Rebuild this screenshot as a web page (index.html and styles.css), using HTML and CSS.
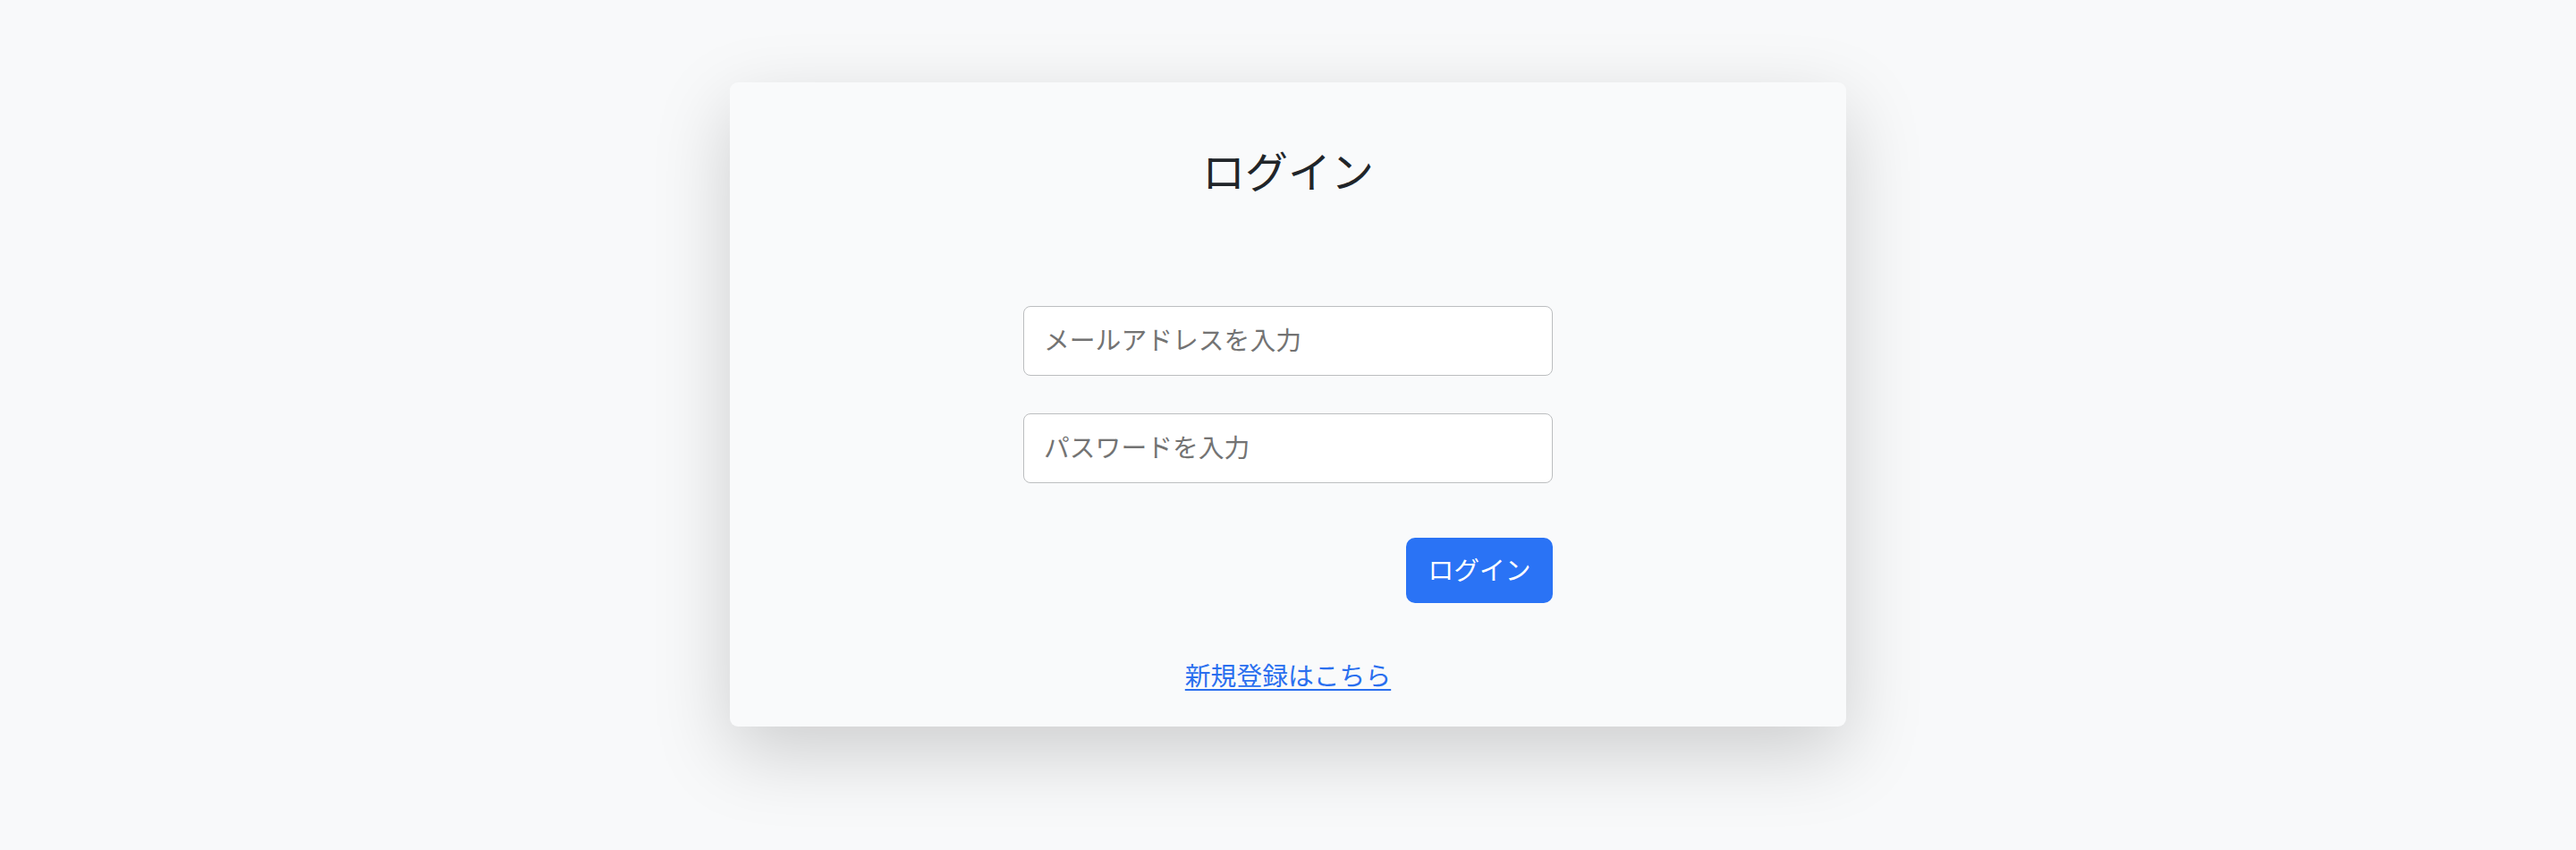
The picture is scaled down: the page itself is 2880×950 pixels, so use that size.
FILE: index.html
```html
<!DOCTYPE html>
<html lang="ja">
<head>
<meta charset="utf-8">
<title>ログイン</title>
<link rel="stylesheet" href="styles.css">
</head>
<body>
<main class="page">
  <section class="card">
    <h1 class="card-title">ログイン</h1>
    <form class="login-form">
      <input class="field" type="email" placeholder="メールアドレスを入力">
      <input class="field" type="password" placeholder="パスワードを入力">
      <button class="btn-primary" type="button">ログイン</button>
    </form>
    <a class="signup-link" href="#">新規登録はこちら</a>
  </section>
</main>
</body>
</html>
```

FILE: styles.css
```css
html, body {
  margin: 0;
  padding: 0;
  background: #f8f9fa;
  font-family: "Noto Sans CJK JP", "Noto Sans", sans-serif;
  color: #212529;
}

.page {
  display: flex;
  justify-content: center;
  align-items: flex-start;
  box-sizing: border-box;
  min-height: 950px;
  padding-top: 92px;
}

.card {
  width: 1248px;
  box-sizing: border-box;
  height: 720px;
  background: #f9fafb;
  border-radius: 9px;
  box-shadow: 0 29px 86px rgba(0, 0, 0, 0.175);
  display: flex;
  flex-direction: column;
  align-items: center;
  padding-top: 68px;
}

.card-title {
  margin: 0 0 124px 0;
  font-size: 48px;
  line-height: 58px;
  font-weight: 400;
  color: #212529;
}

.login-form {
  width: 592px;
  display: flex;
  flex-direction: column;
}

.field {
  box-sizing: border-box;
  width: 100%;
  height: 78px;
  margin: 0 0 42px 0;
  padding: 0 22px 6px 22px;
  border: 1.8px solid #bcbec0;
  border-radius: 8px;
  background: #ffffff;
  font-family: inherit;
  font-size: 28.8px;
  color: #212529;
  outline: none;
}

.field + .field {
  margin-bottom: 61px;
}

.field::placeholder {
  color: #737373;
}

.btn-primary {
  align-self: flex-end;
  box-sizing: border-box;
  width: 164px;
  height: 73px;
  padding: 0 0 4px 0;
  border: none;
  border-radius: 10px;
  background: #2a73f5;
  color: #ffffff;
  font-family: inherit;
  font-size: 28.8px;
  cursor: pointer;
}

.signup-link {
  margin-top: 58px;
  font-size: 28.8px;
  line-height: 43px;
  color: #2a6fef;
  text-decoration: underline;
  text-underline-offset: 4px;
  text-decoration-thickness: 2px;
}
```
